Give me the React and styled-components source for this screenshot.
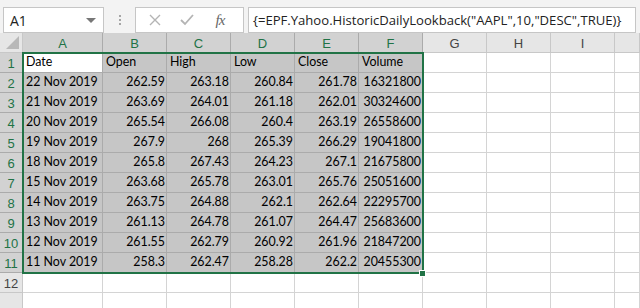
import React from "react";
import styled, { createGlobalStyle } from "styled-components";

const Global = createGlobalStyle`
  html, body { margin: 0; padding: 0; background: #ffffff; }
  body { width: 640px; height: 308px; overflow: hidden; font-family: Lato, "Liberation Sans", sans-serif; }
`;

const Page = styled.div`
  width: 640px;
  height: 308px;
  display: flex;
  flex-direction: column;
  background: #f3f3f3;
  overflow: hidden;
`;

const Toolbar = styled.div`
  height: 42px;
  display: flex;
  align-items: flex-start;
  padding: 7px 0 0 3px;
  box-sizing: border-box;
  background: #f3f3f3;
`;

const NameBox = styled.div`
  width: 101px;
  height: 26px;
  box-sizing: border-box;
  background: #fff;
  border: 1px solid #c6c6c6;
  display: flex;
  align-items: center;
  justify-content: space-between;
  padding: 0 7px 0 6px;
  font-family: "Open Sans", "Liberation Sans", sans-serif;
  font-size: 14px;
  color: #222;
`;

const Caret = styled.span`
  width: 0;
  height: 0;
  border-left: 5px solid transparent;
  border-right: 5px solid transparent;
  border-top: 5px solid #777;
  margin-top: 1px;
`;

const Dots = styled.div`
  width: 31px;
  height: 26px;
  display: flex;
  flex-direction: column;
  align-items: center;
  justify-content: center;
  gap: 2px;
  span {
    width: 2px;
    height: 2px;
    background: #a6a6a6;
  }
`;

const FxBox = styled.div`
  width: 109px;
  height: 26px;
  box-sizing: border-box;
  background: #fff;
  border: 1px solid #c6c6c6;
  display: flex;
  align-items: center;
  padding: 0 0 0 10px;
`;

const IconSlot = styled.div`
  width: ${(p) => p.$w}px;
  height: 24px;
  display: flex;
  align-items: center;
  justify-content: center;
`;

const FxText = styled.span`
  font-family: "Liberation Serif", serif;
  font-style: italic;
  font-size: 15px;
  color: #666;
  letter-spacing: -1px;
`;

const FormulaBox = styled.div`
  margin-left: 4px;
  width: 388px;
  height: 26px;
  box-sizing: border-box;
  background: #fff;
  border: 1px solid #c6c6c6;
  display: flex;
  align-items: center;
  padding: 0 0 0 4px;
  font-family: "Open Sans", "Liberation Sans", sans-serif;
  font-size: 13.1px;
  color: #222;
  white-space: nowrap;
  overflow: hidden;
`;

const SheetWrap = styled.div`
  position: relative;
  flex: 1;
  background: #fff;
`;

const Grid = styled.div`
  display: grid;
  grid-template-columns: 23px 80px repeat(8, 64px) 1fr;
  grid-auto-rows: 20px;
`;

const HeadCell = styled.div`
  box-sizing: border-box;
  background: ${(p) => (p.$sel ? "#d2d2d2" : "#e6e6e6")};
  color: ${(p) => (p.$sel ? "#217346" : "#444")};
  border-right: 1px solid ${(p) => (p.$sel ? "#ababab" : "#c8c8c8")};
  border-bottom: 1px solid ${(p) => (p.$sel ? "#ababab" : "#c8c8c8")};
  display: flex;
  align-items: center;
  justify-content: center;
  font-family: "Liberation Sans", sans-serif;
  font-size: 13px;
  padding-top: 1px;
`;

const RowHead = styled(HeadCell)`
  justify-content: center;
`;

const Corner = styled.div`
  box-sizing: border-box;
  background: #e6e6e6;
  border-right: 1px solid #c8c8c8;
  border-bottom: 1px solid #c8c8c8;
  position: relative;
  &::after {
    content: "";
    position: absolute;
    right: 3px;
    bottom: 3px;
    width: 0;
    height: 0;
    border-left: 13px solid transparent;
    border-bottom: 13px solid #b8b8b8;
  }
`;

const Cell = styled.div`
  box-sizing: border-box;
  background: ${(p) => (p.$active ? "#fff" : p.$sel ? "#c6c6c6" : "#fff")};
  border-right: 1px solid ${(p) => (p.$sel ? "#ababab" : "#d4d4d4")};
  border-bottom: 1px solid ${(p) => (p.$sel ? "#ababab" : "#d4d4d4")};
  display: flex;
  align-items: flex-end;
  justify-content: ${(p) => (p.$num ? "flex-end" : "flex-start")};
  padding: 0 1px 1px 3px;
  font-family: Lato, "Liberation Sans", sans-serif;
  font-size: 12.4px;
  line-height: 18px;
  color: #000;
  white-space: nowrap;
  overflow: hidden;
`;

const Selection = styled.div`
  position: absolute;
  left: 22px;
  top: 19px;
  width: 402px;
  height: 222px;
  box-sizing: border-box;
  border: 2px solid #217346;
  pointer-events: none;
`;

const Handle = styled.div`
  position: absolute;
  left: 419px;
  top: 237px;
  width: 7px;
  height: 7px;
  box-sizing: border-box;
  background: #217346;
  border: 1px solid #fff;
  pointer-events: none;
`;

const cols = ["A", "B", "C", "D", "E", "F", "G", "H", "I", ""];
const header = ["Date", "Open", "High", "Low", "Close", "Volume"];
const data = [
  ["22 Nov 2019", "262.59", "263.18", "260.84", "261.78", "16321800"],
  ["21 Nov 2019", "263.69", "264.01", "261.18", "262.01", "30324600"],
  ["20 Nov 2019", "265.54", "266.08", "260.4", "263.19", "26558600"],
  ["19 Nov 2019", "267.9", "268", "265.39", "266.29", "19041800"],
  ["18 Nov 2019", "265.8", "267.43", "264.23", "267.1", "21675800"],
  ["15 Nov 2019", "263.68", "265.78", "263.01", "265.76", "25051600"],
  ["14 Nov 2019", "263.75", "264.88", "262.1", "262.64", "22295700"],
  ["13 Nov 2019", "261.13", "264.78", "261.07", "264.47", "25683600"],
  ["12 Nov 2019", "261.55", "262.79", "260.92", "261.96", "21847200"],
  ["11 Nov 2019", "258.3", "262.47", "258.28", "262.2", "20455300"],
];

function XIcon() {
  return (
    <svg width="12" height="12" viewBox="0 0 12 12">
      <path d="M1 1 L11 11 M11 1 L1 11" stroke="#b4b4b4" strokeWidth="1.4" fill="none" />
    </svg>
  );
}

function CheckIcon() {
  return (
    <svg width="14" height="12" viewBox="0 0 14 12">
      <path d="M1 6 L5 10 L13 1" stroke="#b4b4b4" strokeWidth="1.8" fill="none" />
    </svg>
  );
}

export default function App() {
  const rows = [header, ...data];
  const totalRows = 13;

  return (
    <>
      <Global />
      <Page>
        <Toolbar>
          <NameBox>
            <span>A1</span>
            <Caret />
          </NameBox>
          <Dots>
            <span />
            <span />
            <span />
          </Dots>
          <FxBox>
            <IconSlot $w={18}>
              <XIcon />
            </IconSlot>
            <IconSlot $w={46}>
              <CheckIcon />
            </IconSlot>
            <IconSlot $w={20}>
              <FxText>fx</FxText>
            </IconSlot>
          </FxBox>
          <FormulaBox>{'{=EPF.Yahoo.HistoricDailyLookback("AAPL",10,"DESC",TRUE)}'}</FormulaBox>
        </Toolbar>
        <SheetWrap>
          <Grid>
            <Corner />
            {cols.map((c, i) => (
              <HeadCell key={"h" + i} $sel={i < 6}>
                {c}
              </HeadCell>
            ))}
            {Array.from({ length: totalRows }).map((_, r) => {
              const rowData = rows[r];
              const inSel = r < 11;
              return (
                <React.Fragment key={"r" + r}>
                  <RowHead $sel={inSel}>{r < 12 ? r + 1 : ""}</RowHead>
                  {cols.map((_, c) => {
                    const val = rowData && c < 6 ? rowData[c] : "";
                    const sel = inSel && c < 6;
                    const isNum = r > 0 && c > 0;
                    return (
                      <Cell key={c} $sel={sel} $active={r === 0 && c === 0} $num={isNum}>
                        {val}
                      </Cell>
                    );
                  })}
                </React.Fragment>
              );
            })}
          </Grid>
          <Selection />
          <Handle />
        </SheetWrap>
      </Page>
    </>
  );
}
